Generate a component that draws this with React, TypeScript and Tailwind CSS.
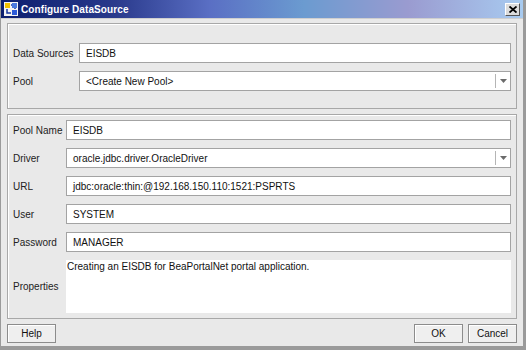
import React from "react";

const font = { fontFamily: '"Liberation Sans", Arial, sans-serif' };

function Field({ label, value, labelW, dropdown }: { label: string; value: string; labelW: string; dropdown?: boolean }) {
  return (
    <div className="flex items-center h-[20px]">
      <div className={`${labelW} shrink-0 text-[10px] text-[#222] pl-[5px]`}>{label}</div>
      <div className="flex-1 h-[20px] bg-white border border-[#a3a3a3] flex items-center text-[10px] text-[#111]">
        <div className="flex-1 pl-[6px] whitespace-nowrap overflow-hidden">{value}</div>
        {dropdown && (
          <div className="flex items-center h-full">
            <div className="w-[1px] h-[14px] bg-[#b5b5b5]" />
            <div className="w-[14px] flex justify-center">
              <svg width="7" height="4" viewBox="0 0 7 4"><path d="M0 0h7L3.5 4z" fill="#6b6b6b" /></svg>
            </div>
          </div>
        )}
      </div>
    </div>
  );
}

function Btn({ label, w }: { label: string; w: string }) {
  return (
    <div className={`${w} h-[19px] border border-[#8c8c8c] bg-[#efefef] flex items-center justify-center text-[10px] text-[#111] shadow-[inset_1px_1px_0_#fff]`}>
      {label}
    </div>
  );
}

export default function App() {
  return (
    <div style={font} className="w-[526px] h-[350px] bg-[#e9e9e9] border-r-[3px] border-b-[4px] border-l-[1px] border-[#9a9a9a] flex flex-col overflow-hidden">
      <div className="h-[18px] shrink-0 flex items-center bg-[linear-gradient(90deg,#0c1f6e_0%,#2a3a8c_22%,#5a6fc4_40%,#6b9bd0_58%,#9a9bd0_78%,#a8cbf0_100%)]">
        <svg className="ml-[3px]" width="14" height="14" viewBox="0 0 14 14">
          <rect x="0" y="0" width="14" height="14" fill="#f4f4f4" />
          <rect x="1" y="1" width="5" height="5" fill="#f3c300" />
          <rect x="8" y="8" width="5" height="5" fill="#2d5bd8" />
          <path d="M3 7v4h4M7 3h4v4" stroke="#1a3aa0" strokeWidth="1.5" fill="none" />
          <rect x="8" y="1" width="5" height="5" fill="#4a7ae0" />
        </svg>
        <div className="ml-[3px] text-[10px] font-bold text-white tracking-[0.1px]">Configure DataSource</div>
        <div className="flex-1" />
        <div className="mr-[3px] w-[15px] h-[13px] bg-[#dcdcdc] border border-t-white border-l-white border-r-[#555] border-b-[#555] flex items-center justify-center">
          <svg width="8" height="7" viewBox="0 0 8 7"><path d="M0.5 0.5L7.5 6.5M7.5 0.5L0.5 6.5" stroke="#000" strokeWidth="1.8" /></svg>
        </div>
      </div>
      <div className="flex-1 flex flex-col px-[6px] pt-[4px] border-t border-[#cfcfcf]">
        <div className="h-[86px] border border-[#a8a8a8] shadow-[inset_1px_1px_0_#fff] pt-[19px] pr-[5px] flex flex-col gap-[8px]">
          <Field label="Data Sources" value="EISDB" labelW="w-[71px]" />
          <Field label="Pool" value="<Create New Pool>" labelW="w-[71px]" dropdown />
        </div>
        <div className="mt-[5px] h-[205px] border border-[#a8a8a8] shadow-[inset_1px_1px_0_#fff] pt-[5px] pr-[5px] flex flex-col gap-[8px]">
          <Field label="Pool Name" value="EISDB" labelW="w-[58px]" />
          <Field label="Driver" value="oracle.jdbc.driver.OracleDriver" labelW="w-[58px]" dropdown />
          <Field label="URL" value="jdbc:oracle:thin:@192.168.150.110:1521:PSPRTS" labelW="w-[58px]" />
          <Field label="User" value="SYSTEM" labelW="w-[58px]" />
          <Field label="Password" value="MANAGER" labelW="w-[58px]" />
          <div className="flex items-center h-[53px]">
            <div className="w-[58px] shrink-0 text-[10px] text-[#222] pl-[5px]">Properties</div>
            <div className="flex-1 h-full bg-white text-[10px] text-[#111] pl-[1px] pt-[1px] leading-[12px]">
              Creating an EISDB for BeaPortalNet portal application.
            </div>
          </div>
        </div>
        <div className="mt-[5px] flex items-center">
          <Btn label="Help" w="w-[49px]" />
          <div className="flex-1" />
          <Btn label="OK" w="w-[49px]" />
          <div className="w-[5px]" />
          <Btn label="Cancel" w="w-[49px]" />
        </div>
      </div>
    </div>
  );
}
